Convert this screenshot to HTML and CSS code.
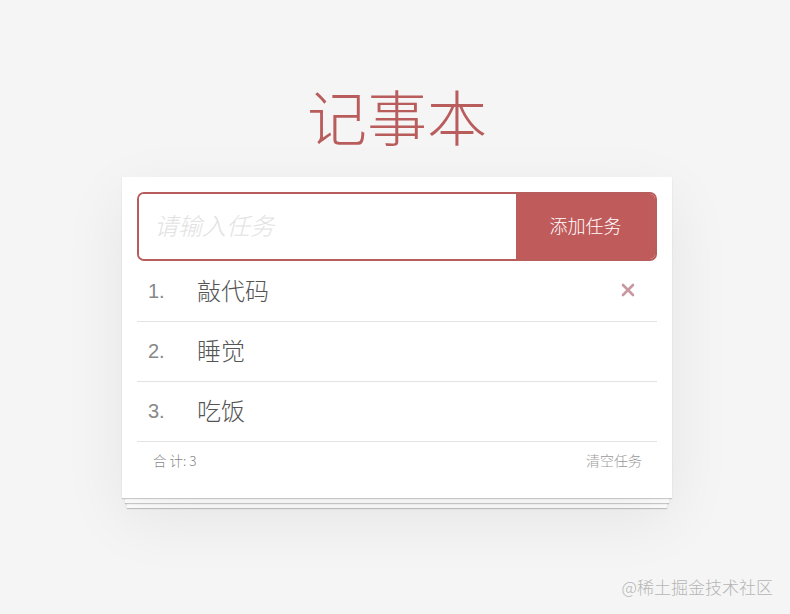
FILE: index.html
```html
<!DOCTYPE html>
<html lang="zh">
<head>
<meta charset="utf-8">
<title>记事本</title>
<link rel="stylesheet" href="styles.css">
</head>
<body>
<div class="page">
  <h1 class="title">记事本</h1>
  <div class="card">
    <div class="input-row">
      <input class="task-input" type="text" placeholder="请输入任务">
      <button class="add-btn">添加任务</button>
    </div>
    <ul class="list">
      <li class="item">
        <span class="num">1.</span>
        <span class="text">敲代码</span>
        <span class="del">
          <svg width="14" height="14" viewBox="0 0 14 14"><path d="M2 2 L12 12 M12 2 L2 12" stroke="#c8979f" stroke-width="2.6" stroke-linecap="round"/></svg>
        </span>
      </li>
      <li class="item">
        <span class="num">2.</span>
        <span class="text">睡觉</span>
      </li>
      <li class="item">
        <span class="num">3.</span>
        <span class="text">吃饭</span>
      </li>
    </ul>
    <div class="footer">
      <span class="count">合 计: 3</span>
      <span class="clear">清空任务</span>
    </div>
  </div>
  <div class="paper paper-1"></div>
  <div class="paper paper-2"></div>
</div>
<div class="watermark">@稀土掘金技术社区</div>
</body>
</html>
```
FILE: styles.css
```css
html, body {
  margin: 0;
  padding: 0;
  height: 100%;
}
body {
  background: #f5f5f5;
  font-family: "Noto Sans CJK SC", "Liberation Sans", sans-serif;
  position: relative;
  overflow: hidden;
}
.page {
  width: 550px;
  margin-left: calc(50% - 273px);
  padding-top: 79px;
}
.title {
  margin: 0 0 26px;
  text-align: center;
  font-size: 60px;
  line-height: 72px;
  font-weight: 300;
  color: #b95c5c;
}
.card {
  background: #fff;
  padding: 15px 15px 0;
  box-shadow: 0 1px 1px rgba(0,0,0,0.18), 0 20px 60px rgba(0,0,0,0.07);
  position: relative;
  z-index: 2;
}
.input-row {
  display: flex;
  height: 69px;
  border: 2px solid #b95c5c;
  border-radius: 7px;
  overflow: hidden;
  box-sizing: border-box;
}
.task-input {
  flex: 1;
  border: none;
  outline: none;
  padding: 0 16px 4px 15px;
  font-family: "Noto Sans CJK SC", sans-serif;
  font-size: 24px;
  font-weight: 300;
  color: #666;
  background: #fff;
  min-width: 0;
}
.task-input::placeholder {
  color: #e2e2e2;
  font-style: italic;
}
.add-btn {
  width: 139px;
  border: none;
  background: #c05b5b;
  color: #fff;
  font-family: "Noto Sans CJK SC", sans-serif;
  font-size: 18px;
  font-weight: 300;
  padding: 0 0 4px;
}
.list {
  list-style: none;
  margin: 0;
  padding: 0;
}
.item {
  display: flex;
  align-items: center;
  height: 60px;
  border-bottom: 1px solid #e3e3e3;
  padding: 0 10px 0 11px;
  box-sizing: border-box;
}
.item:first-child {
  height: 61px;
}
.num {
  width: 49px;
  font-family: "Liberation Sans", sans-serif;
  font-size: 20px;
  color: #888;
}
.text {
  flex: 1;
  font-size: 24px;
  font-weight: 300;
  color: #555;
  margin-bottom: 4px;
}
.del {
  display: flex;
  margin-right: 12px;
  margin-top: -2px;
}
.footer {
  display: flex;
  justify-content: space-between;
  height: 56px;
  padding: 8px 15px 0 16px;
  box-sizing: border-box;
  font-size: 13px;
  color: #888;
  line-height: 20px;
}
.count {
  font-weight: 300;
  font-size: 13.5px;
}
.clear {
  font-weight: 300;
  font-size: 14px;
  color: #999;
}
.paper {
  height: 5px;
  background: #fff;
  margin: 0 auto;
  box-shadow: 0 1px 1px rgba(0,0,0,0.2);
  position: relative;
}
.paper-1 {
  width: 544px;
  z-index: 1;
}
.paper-2 {
  width: 540px;
  z-index: 0;
}
.watermark {
  position: absolute;
  right: 17px;
  top: 574px;
  font-size: 17px;
  color: #b5b5b5;
  font-weight: 300;
}
```
